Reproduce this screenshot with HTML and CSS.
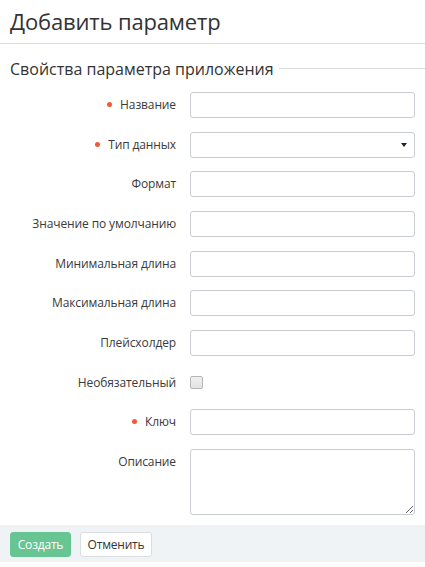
FILE: index.html
```html
<!DOCTYPE html>
<html lang="ru">
<head>
<meta charset="utf-8">
<title>Добавить параметр</title>
<link rel="stylesheet" href="styles.css">
</head>
<body>
<div class="header"><h1 class="title">Добавить параметр</h1></div>
<div class="section">
  <span class="section-title">Свойства параметра приложения</span>
  <span class="section-line"></span>
</div>
<form class="form">
  <div class="row"><label class="label required">Название</label><input class="input" type="text"></div>
  <div class="row"><label class="label required">Тип данных</label><div class="select-wrap"><select class="input select"><option></option></select></div></div>
  <div class="row"><label class="label">Формат</label><input class="input" type="text"></div>
  <div class="row"><label class="label">Значение по умолчанию</label><input class="input" type="text"></div>
  <div class="row"><label class="label">Минимальная длина</label><input class="input" type="text"></div>
  <div class="row"><label class="label">Максимальная длина</label><input class="input" type="text"></div>
  <div class="row"><label class="label">Плейсхолдер</label><input class="input" type="text"></div>
  <div class="row"><label class="label">Необязательный</label><div class="check-cell"><input class="check" type="checkbox"></div></div>
  <div class="row"><label class="label required">Ключ</label><input class="input" type="text"></div>
  <div class="row row-top"><label class="label">Описание</label><textarea class="input textarea"></textarea></div>
</form>
<div class="footer">
  <button class="btn btn-primary" type="button">Создать</button>
  <button class="btn btn-default" type="button">Отменить</button>
</div>
</body>
</html>
```
FILE: styles.css
```css
* { box-sizing: border-box; }
html, body { margin: 0; padding: 0; background: #fff; }
body {
  font-family: "Open Sans", "Noto Sans", sans-serif;
  color: #333;
  font-size: 12px;
  width: 425px;
}
.header {
  height: 44px;
  border-bottom: 1px solid #dcdde0;
  padding: 0 10px;
}
.title {
  margin: 0;
  font-size: 22px;
  font-weight: 400;
  line-height: 42px;
  color: #333;
  letter-spacing: -0.15px;
}
.section {
  display: flex;
  align-items: center;
  padding: 0 0 0 10px;
  height: 48px;
}
.section-title {
  font-size: 16px;
  color: #333;
  line-height: 20px;
  margin-top: 2px;
}
.section-line {
  flex: 1;
  height: 1px;
  background: #d7dade;
  margin-left: 5px;
  margin-top: 1px;
}
.form {
  padding: 0 10px 0 0;
}
.row {
  display: grid;
  grid-template-columns: 176px 225px;
  column-gap: 14px;
  align-items: center;
  height: 26px;
  margin-bottom: 13.67px;
}
.row-top {
  height: 66px;
  align-items: start;
  margin-bottom: 10px;
}
.row-top .label { padding-top: 4px; }
.label {
  text-align: right;
  font-size: 12px;
  line-height: 18px;
  color: #3a3a3a;
  letter-spacing: -0.12px;
}
.required::before {
  content: "";
  display: inline-block;
  width: 5px;
  height: 5px;
  border-radius: 50%;
  background: #f05a36;
  margin-right: 8px;
  vertical-align: 2px;
}
.input {
  width: 225px;
  height: 26px;
  border: 1px solid #c9ccd1;
  border-radius: 3px;
  background: #fff;
  font-family: inherit;
  font-size: 12px;
  padding: 3px 6px;
  margin: 0;
  outline: none;
}
.select-wrap { position: relative; width: 225px; height: 26px; }
.select {
  appearance: none;
  -webkit-appearance: none;
}
.select-wrap::after {
  content: "";
  position: absolute;
  right: 8px;
  top: 11px;
  border-left: 3px solid transparent;
  border-right: 3px solid transparent;
  border-top: 4px solid #222;
  pointer-events: none;
}
.textarea {
  height: 66px;
  resize: vertical;
  display: block;
}
.check-cell { display: flex; align-items: center; height: 26px; }
.check {
  appearance: none;
  -webkit-appearance: none;
  width: 13px;
  height: 13px;
  margin: 0;
  border: 1px solid #b5b5b5;
  border-radius: 2px;
  background: linear-gradient(#f0f0f0, #e2e2e2);
}
.footer {
  background: #f0f3f6;
  height: 37px;
  padding: 7px 10px 5px;
  display: flex;
  gap: 9px;
  align-items: flex-start;
}
.btn {
  height: 25px;
  font-family: inherit;
  font-size: 12px;
  border-radius: 3px;
  padding: 0 6px;
  line-height: 23px;
  margin: 0;
  cursor: pointer;
  letter-spacing: -0.2px;
}
.btn-primary {
  width: 61px;
  background: #67c594;
  border: 1px solid #67c594;
  color: #fff;
}
.btn-default {
  width: 72px;
  background: #fff;
  border: 1px solid #dadde1;
  color: #333;
}
```
